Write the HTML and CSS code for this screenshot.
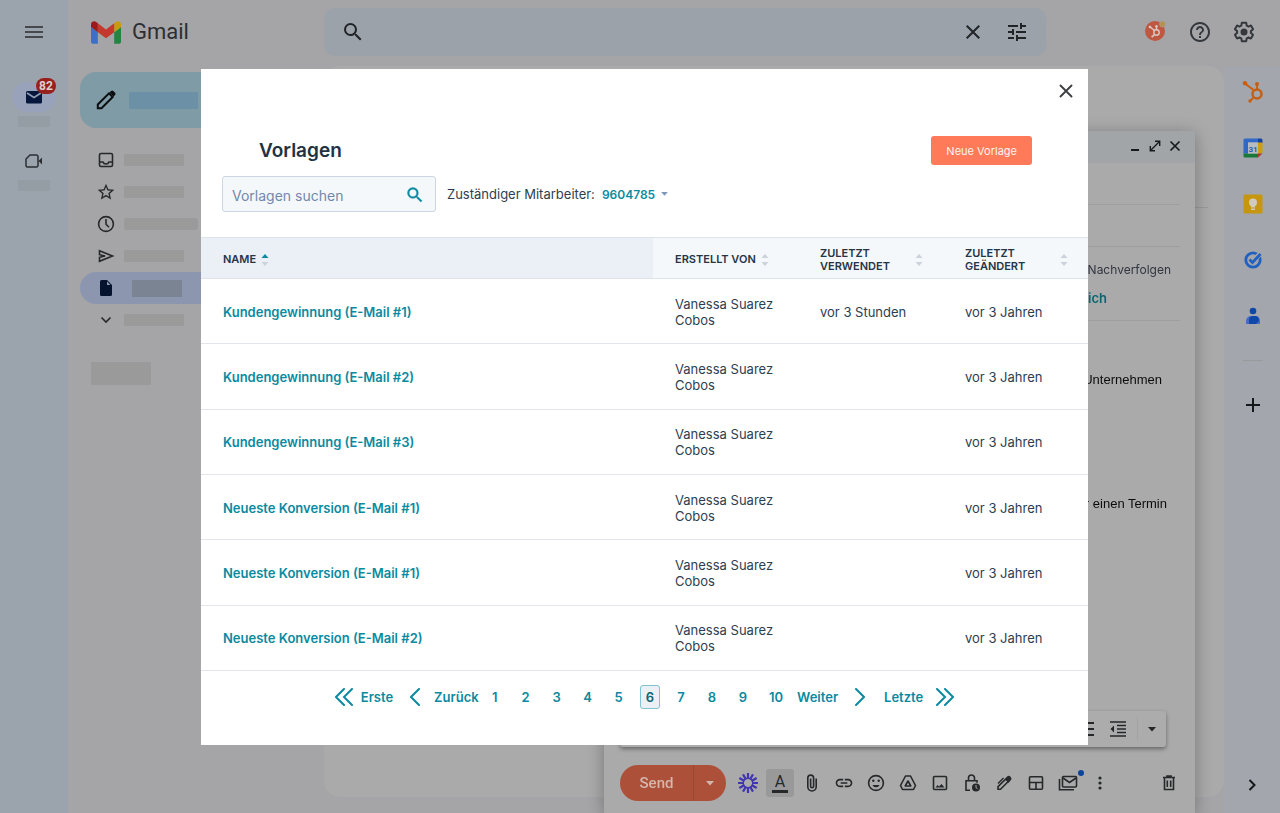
FILE: index.html
```html
<!DOCTYPE html>
<html lang="de">
<head>
<meta charset="utf-8">
<meta name="viewport" content="width=device-width, initial-scale=1">
<title>Gmail – Vorlagen</title>
<link rel="stylesheet" href="styles.css">
</head>
<body>
<svg class="sprite" aria-hidden="true">
  <symbol id="close" viewBox="0 0 24 24"><path d="M19 6.41 17.59 5 12 10.59 6.41 5 5 6.41 10.59 12 5 17.59 6.41 19 12 13.41 17.59 19 19 17.59 13.41 12z"/></symbol>
  <symbol id="search" viewBox="0 0 24 24"><path d="M15.5 14h-.79l-.28-.27A6.471 6.471 0 0 0 16 9.5 6.5 6.5 0 1 0 9.5 16c1.61 0 3.09-.59 4.23-1.57l.27.28v.79l5 4.99L20.49 19l-4.99-5zm-6 0C7.01 14 5 11.99 5 9.5S7.01 5 9.5 5 14 7.01 14 9.5 11.99 14 9.5 14z"/></symbol>
  <symbol id="sort" viewBox="0 0 8 14"><path d="M4 1 7.5 5H.5z"/><path d="M4 13 .5 9h7z" fill="#cbd2db"/></symbol>
  <symbol id="caret" viewBox="0 0 10 6"><path d="M0 0h10L5 5.5z"/></symbol>
</svg>

<div class="app">
  <nav class="rail" aria-label="Apps">
    <button class="icon-btn" aria-label="Menü"><svg width="24" height="24" viewBox="0 0 24 24" fill="#45484c"><path d="M3 18h18v-2H3zm0-5h18v-2H3zM3 6v2h18V6z"/></svg></button>
    <button class="rail-mail" aria-label="E-Mail">
      <svg width="20" height="20" viewBox="0 0 20 20"><rect x="2" y="4" width="16" height="12.500" rx="1.500" fill="#05173d"/><path d="m3 6 7 4.500L17 6" fill="none" stroke="#95a0b5" stroke-width="1.500"/></svg>
      <span class="badge">82</span>
    </button>
    <span class="bar rail-bar"></span>
    <button class="icon-btn rail-meet" aria-label="Meet"><svg width="20" height="20" viewBox="0 0 20 20"><path d="M6 4h6.500A1.500 1.500 0 0 1 14 5.500v9a1.500 1.500 0 0 1-1.500 1.500h-9A1.500 1.500 0 0 1 2 14.500V8z" fill="none" stroke="#2b2f33" stroke-width="1.500" stroke-linejoin="round"/><path d="m14.500 10 3.500-3.500v7z" fill="#2b2f33"/></svg></button>
    <span class="bar rail-bar rail-bar-meet"></span>
  </nav>

  <div class="main">
    <header class="topbar">
      <a class="brand" href="#"><svg width="30" height="23" viewBox="52 42 88 66"><path fill="#3d6fc6" d="M58 108h14V74L52 59v43c0 3.320 2.690 6 6 6"/><path fill="#238542" d="M120 108h14c3.320 0 6-2.690 6-6V59l-20 15"/><path fill="#c99a10" d="M120 48v26l20-15v-8c0-7.420-8.470-11.650-14.400-7.200"/><path fill="#c5382d" d="M72 74V48l24 18 24-18v26L96 92"/><path fill="#9c1a1a" d="M52 51v8l20 15V48l-5.600-4.200c-5.940-4.450-14.400-.22-14.400 7.200"/></svg><span>Gmail</span></a>
      <form class="mail-search" role="search">
        <svg width="24" height="24" fill="#202427"><use href="#search"/></svg>
        <input type="text" aria-label="E-Mails durchsuchen">
        <button type="button" class="icon-btn" aria-label="Suche löschen"><svg width="24" height="24" fill="#202427"><use href="#close"/></svg></button>
        <button type="button" class="icon-btn" aria-label="Suchoptionen"><svg width="24" height="24" viewBox="0 0 24 24" fill="#202427"><path d="M3 17v2h6v-2H3zM3 5v2h10V5H3zm10 16v-2h8v-2h-8v-2h-2v6h2zM7 9v2H3v2h4v2h2V9H7zm14 4v-2H11v2h10zm-6-4h2V7h4V5h-4V3h-2v6z"/></svg></button>
      </form>
      <div class="top-actions">
        <button class="icon-btn" aria-label="HubSpot"><svg width="24" height="24" viewBox="0 0 24 24"><circle cx="11" cy="11" r="10" fill="#c05740"/><g fill="none" stroke="#d8cac5" stroke-width="1.400"><circle cx="12.500" cy="12.500" r="2.700"/><path d="m6 7 4.500 3.500M12.500 9.800V6.500M10.500 14.500l-2 2"/></g><circle cx="6" cy="7" r="1.300" fill="#d8cac5"/><circle cx="12.500" cy="6.300" r="1.200" fill="#d8cac5"/><circle cx="8.300" cy="16.500" r="1" fill="#d8cac5"/><circle cx="18.500" cy="4" r="3" fill="#b3934e" stroke="#a5a5a8" stroke-width=".6"/></svg></button>
        <button class="icon-btn" aria-label="Hilfe"><svg width="24" height="24" viewBox="0 0 24 24" fill="#34373b"><path d="M11 18h2v-2h-2v2zm1-16C6.480 2 2 6.480 2 12s4.480 10 10 10 10-4.480 10-10S17.520 2 12 2zm0 18c-4.410 0-8-3.590-8-8s3.590-8 8-8 8 3.590 8 8-3.590 8-8 8zm0-14c-2.210 0-4 1.790-4 4h2c0-1.100.9-2 2-2s2 .9 2 2c0 2-3 1.750-3 5h2c0-2.250 3-2.500 3-5 0-2.210-1.790-4-4-4z"/></svg></button>
        <button class="icon-btn" aria-label="Einstellungen"><svg width="24" height="24" viewBox="0 0 24 24" fill="#34373b"><path d="M13.850 22.250h-3.700c-.74 0-1.360-.54-1.450-1.270l-.27-1.890c-.27-.14-.53-.29-.79-.46l-1.800.72c-.7.26-1.470-.03-1.810-.65L2.200 15.530c-.35-.66-.2-1.440.36-1.880l1.530-1.190c-.01-.15-.02-.3-.02-.46 0-.15.010-.31.020-.46l-1.520-1.190c-.59-.45-.74-1.260-.37-1.880l1.850-3.190c.34-.62 1.110-.9 1.790-.63l1.810.73c.26-.17.52-.32.78-.46l.27-1.910c.09-.7.71-1.250 1.440-1.250h3.700c.74 0 1.360.54 1.450 1.270l.27 1.890c.27.140.53.290.79.460l1.800-.72c.71-.26 1.480.03 1.820.65l1.840 3.180c.36.66.2 1.440-.36 1.880l-1.520 1.190c.01.150.02.300.02.460s-.01.310-.02.460l1.520 1.190c.56.450.72 1.230.37 1.860l-1.860 3.220c-.34.620-1.110.9-1.800.63l-1.800-.72c-.26.170-.52.320-.78.460l-.27 1.910c-.1.680-.72 1.220-1.460 1.220zm-3.230-2h2.760l.37-2.550.53-.22c.44-.18.880-.44 1.340-.78l.45-.34 2.380.96 1.380-2.400-2.030-1.580.07-.56c.03-.26.06-.51.06-.78s-.03-.53-.06-.78l-.07-.56 2.030-1.580-1.390-2.400-2.390.96-.45-.35c-.42-.32-.87-.58-1.330-.77l-.52-.22-.37-2.550h-2.760l-.37 2.550-.53.210c-.44.190-.88.440-1.340.79l-.45.330-2.380-.95-1.390 2.390 2.030 1.580-.07.56a7 7 0 0 0-.06.79c0 .26.02.53.06.78l.07.56-2.030 1.580 1.380 2.400 2.390-.96.450.35c.43.33.86.580 1.330.77l.53.22.38 2.550z"/><circle cx="12" cy="12" r="3.500"/></svg></button>
      </div>
    </header>

    <div class="content">
      <nav class="folders" aria-label="Ordner">
        <button class="compose-btn" aria-label="Schreiben"><svg width="24" height="24" viewBox="0 0 24 24"><path d="M3.800 20.200v-3.700L15 5.300l3.700 3.700L7.500 20.200z" fill="none" stroke="#0a0e10" stroke-width="2"/><path d="m15.500 4.500 1.600-1.600a1.600 1.600 0 0 1 2.200 0l1.800 1.800a1.600 1.600 0 0 1 0 2.200L19.500 8.500z" fill="#0a0e10"/></svg><span class="bar compose-bar"></span></button>
        <a class="folder" href="#" aria-label="Posteingang"><svg width="20" height="20" viewBox="0 0 20 20" class="line"><rect x="3.500" y="3.500" width="13" height="13" rx="1.500"/><path d="M3.500 12H7c.4 1.300 1.500 2 3 2s2.600-.7 3-2h3.500"/></svg><span class="bar"></span></a>
        <a class="folder" href="#" aria-label="Markiert"><svg width="20" height="20" viewBox="0 0 24 24" fill="#26282a"><path d="m22 9.240-7.190-.62L12 2 9.190 8.630 2 9.240l5.460 4.730L5.820 21 12 17.270 18.180 21l-1.630-7.030L22 9.240zM12 15.400l-3.760 2.270 1-4.280-3.320-2.880 4.380-.38L12 6.100l1.710 4.040 4.380.38-3.320 2.880 1 4.280L12 15.400z"/></svg><span class="bar"></span></a>
        <a class="folder" href="#" aria-label="Zurückgestellt"><svg width="20" height="20" viewBox="0 0 20 20" class="line"><circle cx="10" cy="10" r="7.400"/><path d="M10 5v5.200l3 3"/></svg><span class="bar bar-wide"></span></a>
        <a class="folder" href="#" aria-label="Gesendet"><svg width="20" height="20" viewBox="0 0 20 20" class="line"><path d="M3.500 4.800 16.500 10l-13 5.200V11.300L9 10 3.500 8.700z"/></svg><span class="bar"></span></a>
        <a class="folder folder-active" href="#" aria-label="Entwürfe"><svg width="20" height="20" viewBox="0 0 20 20"><path d="M5.500 2H11l5 5v9.500a1.500 1.500 0 0 1-1.500 1.500h-9A1.500 1.500 0 0 1 4 16.500v-13A1.500 1.500 0 0 1 5.500 2z" fill="#05132f"/><path d="M11 3.500V7h3.500z" fill="#909ab4"/></svg><span class="bar bar-active"></span></a>
        <a class="folder" href="#" aria-label="Mehr"><svg width="20" height="20" viewBox="0 0 20 20" class="line"><path d="m5.500 7.500 4.500 4.500 4.500-4.500"/></svg><span class="bar"></span></a>
        <span class="bar labels-bar"></span>
      </nav>
      <main class="mail"><hr></main>
      <aside class="addons" aria-label="Add-ons">
        <button class="icon-btn" aria-label="HubSpot"><svg width="28" height="28" viewBox="0 0 28 28"><g fill="none" stroke="#c45f14"><circle cx="18" cy="16" r="4.500" stroke-width="2.500"/><path stroke-width="1.800" d="M6 5.500 14.500 12M18 11V6M14.500 19.500l-3 3"/></g><g fill="#c45f14"><circle cx="6" cy="5.300" r="2.200"/><circle cx="18" cy="6" r="2"/><circle cx="11" cy="23" r="1.700"/></g></svg></button>
        <button class="icon-btn" aria-label="Kalender"><svg width="28" height="28" viewBox="0 0 28 28"><path d="M6 4.500h13v4H9v11H4.500V6A1.500 1.500 0 0 1 6 4.500z" fill="#2f68c6"/><path d="M19 4.500h3A1.500 1.500 0 0 1 23.500 6v3H19z" fill="#16439b"/><path d="M19 8.500h4.500v11H19z" fill="#cf9d10"/><path d="M4.500 19.500H19v4H6A1.500 1.500 0 0 1 4.500 22z" fill="#16793a"/><path d="M19 19.500h4.500l-4.500 4z" fill="#b2372c"/><path d="M9 8.500h10v11H9z" fill="#b9bbc0"/><text x="14" y="17.500" text-anchor="middle" class="cal-day">31</text></svg></button>
        <button class="icon-btn" aria-label="Notizen"><svg width="28" height="28" viewBox="0 0 28 28"><rect x="4.500" y="4.500" width="19" height="19" rx="1.500" fill="#c6960e"/><circle cx="14" cy="12.500" r="4" fill="#d0cbbc"/><path d="M12 14h4v3.500h-4zM12 18.500h4v1.500h-4z" fill="#d0cbbc"/></svg></button>
        <button class="icon-btn" aria-label="Aufgaben"><svg width="28" height="28" viewBox="0 0 28 28" fill="none" stroke="#2060be"><circle cx="14" cy="14" r="7.200" stroke-width="2.800"/><path d="m14 15 7.500-7.500" stroke="#a3a6ad" stroke-width="5"/><path d="m10.500 13.500 3 3 8-8.500" stroke-width="2.800"/></svg></button>
        <button class="icon-btn" aria-label="Kontakte"><svg width="28" height="28" viewBox="0 0 28 28"><path d="M7 22v-3a5 5 0 0 1 5-5h4a5 5 0 0 1 5 5v3z" fill="#4a6bc4"/><path d="M10 22v-4a4 4 0 0 1 4-4h2a4 4 0 0 1 4 4v1l-3 3z" fill="#1048a8"/><circle cx="14" cy="9" r="3.300" fill="#1048a8"/></svg></button>
        <hr>
        <button class="icon-btn addon-plus" aria-label="Add-on hinzufügen"><svg width="28" height="28" viewBox="0 0 28 28"><path d="M14 7v14M7 14h14" stroke="#151719" stroke-width="2"/></svg></button>
        <button class="icon-btn addon-toggle" aria-label="Seitenleiste ausblenden"><svg width="28" height="28" viewBox="0 0 28 28"><path d="m10.500 9 5 5-5 5" fill="none" stroke="#151719" stroke-width="2"/></svg></button>
      </aside>
    </div>
  </div>
</div>

<section class="composer" aria-label="Neue Nachricht">
  <div class="composer-head">
    <button class="icon-btn" aria-label="Minimieren"><svg width="16" height="16" viewBox="0 0 16 16"><path d="M4 12h8" stroke="#17191b" stroke-width="2"/></svg></button>
    <button class="icon-btn" aria-label="Vollbild"><svg width="16" height="16" viewBox="0 0 16 16" fill="none" stroke="#17191b" stroke-width="1.400"><path d="m3.500 12.500 9-9M8 3.300h4.700V8M3.300 8v4.700H8"/></svg></button>
    <button class="icon-btn" aria-label="Schließen"><svg width="16" height="16" viewBox="0 0 16 16"><path d="m3.500 3.500 9 9m0-9-9 9" stroke="#17191b" stroke-width="1.700"/></svg></button>
  </div>
  <div class="composer-field"></div>
  <div class="composer-field"></div>
  <div class="composer-tracking">
    <div>Nachverfolgen</div>
    <a class="composer-link" href="#">mich</a>
  </div>
  <div class="composer-text">
    <p class="line-company">Unternehmen</p>
    <p class="line-meeting">für einen Termin</p>
  </div>
  <div class="format-bar">
    <button class="icon-btn" aria-label="Liste"><svg width="18" height="18" viewBox="0 0 18 18"><path d="M0 3h13M0 9h13M0 15h13" stroke="#242628" stroke-width="1.800"/></svg></button>
    <button class="icon-btn" aria-label="Einzug verkleinern"><svg width="18" height="18" viewBox="0 0 18 18"><path d="M1 2h16M8 5.500h9M8 9h9M8 12.500h9M1 16h16" stroke="#242628" stroke-width="1.600"/><path d="M1.500 9 5 5.500v7z" fill="#242628"/></svg></button>
    <button class="icon-btn format-more" aria-label="Mehr Formatierung"><svg width="8" height="5" fill="#242628"><use href="#caret"/></svg></button>
  </div>
  <div class="composer-tools">
    <div class="send"><button class="send-main">Send</button><button class="send-more" aria-label="Sendeoptionen"><svg width="8" height="5" fill="#d2b7ae"><use href="#caret"/></svg></button></div>
    <button class="tool" aria-label="Assistent"><svg width="22" height="22" viewBox="0 0 22 22"><circle cx="11" cy="11" r="4.800" fill="none" stroke="#4135b0" stroke-width="1.400"/><path stroke="#4135b0" stroke-width="2.200" d="M11 1v6M11 15v6M1 11h6M15 11h6M6 2.340l3 5.200M13 14.460l3 5.200M2.340 6l5.200 3M14.460 13l5.200 3M2.340 16l5.200-3M14.460 9l5.200-3M6 19.660l3-5.200M13 7.540l3-5.200"/></svg></button>
    <button class="tool tool-active" aria-label="Formatierung"><span>A</span></button>
    <button class="tool" aria-label="Datei anhängen"><svg width="20" height="20" viewBox="0 0 20 20" class="line"><path d="M14.200 5.500v8.300a4.200 4.200 0 0 1-8.400 0V5a2.900 2.900 0 0 1 5.800 0v8.300a1.500 1.500 0 0 1-3 0V5.500"/></svg></button>
    <button class="tool" aria-label="Link einfügen"><svg width="20" height="20" viewBox="0 0 24 24" fill="#26282a"><path d="M3.900 12c0-1.710 1.390-3.100 3.100-3.100h4V7H7c-2.760 0-5 2.240-5 5s2.240 5 5 5h4v-1.900H7c-1.710 0-3.100-1.390-3.100-3.100zM8 13h8v-2H8v2zm9-6h-4v1.900h4c1.710 0 3.100 1.390 3.100 3.100s-1.390 3.100-3.100 3.100h-4V17h4c2.760 0 5-2.240 5-5s-2.240-5-5-5z"/></svg></button>
    <button class="tool" aria-label="Emoji"><svg width="20" height="20" viewBox="0 0 20 20" class="line"><circle cx="10" cy="10" r="7.400"/><path d="M6.500 12h7c-.6 1.500-1.900 2.300-3.500 2.300S7.100 13.500 6.500 12z" fill="#26282a" stroke="none"/><circle cx="7.300" cy="7.700" r="1.200" fill="#26282a" stroke="none"/><circle cx="12.700" cy="7.700" r="1.200" fill="#26282a" stroke="none"/></svg></button>
    <button class="tool" aria-label="Drive"><svg width="20" height="20" viewBox="0 0 20 20" class="line"><path d="M7.500 3h5l5 9.500-2 4h-11l-2-4zM10 8l2.800 5H7.200z" stroke-linejoin="round"/></svg></button>
    <button class="tool" aria-label="Foto"><svg width="20" height="20" viewBox="0 0 20 20" class="line"><rect x="3.500" y="3.500" width="13" height="13" rx="1"/><path d="m5.500 14.500 2-2.500 1.500 1.500 2.500-2.500 3 3.500z" fill="#26282a" stroke="none"/></svg></button>
    <button class="tool" aria-label="Vertraulich"><svg width="20" height="20" viewBox="0 0 20 20" class="line"><path d="M8 17.200H4V7.800h11v2M6.500 7.500V5a3 3 0 0 1 6 0v2.500"/><circle cx="14" cy="14.500" r="4" fill="#26282a" stroke="none"/><path d="M14 12v2.700l1.500 1" stroke="#aaaaaa" stroke-width="1"/></svg></button>
    <button class="tool" aria-label="Signatur"><svg width="20" height="20" viewBox="0 0 20 20" class="line"><path d="M4 16.200v-2.500L13.500 4.200a1.700 1.700 0 0 1 2.500 2.500L6.500 16.200z"/><path d="m4 10.500 5.500-5.500" stroke-width="1.400"/><path d="m11 6.500 3.500 3.500 3-4L15 3z" fill="#26282a" stroke="none"/></svg></button>
    <button class="tool" aria-label="Layout"><svg width="20" height="20" viewBox="0 0 20 20" class="line"><rect x="3.500" y="3.700" width="13" height="12.600" rx="1"/><path d="M3.500 9.500h13M10 9.500v7"/></svg></button>
    <button class="tool tool-merge" aria-label="Serien-E-Mail"><svg width="20" height="20" viewBox="0 0 20 20" class="line"><rect x="4.500" y="3.500" width="14" height="10.500" rx="1"/><path d="m5 5 6.500 4.500L18 5M1.500 6v10.800H16"/></svg></button>
    <button class="tool" aria-label="Weitere Optionen"><svg width="20" height="20" viewBox="0 0 20 20" fill="#26282a"><circle cx="10" cy="5" r="1.600"/><circle cx="10" cy="10" r="1.600"/><circle cx="10" cy="15" r="1.600"/></svg></button>
    <button class="tool tool-trash" aria-label="Entwurf verwerfen"><svg width="20" height="20" viewBox="0 0 20 20" class="line"><path d="M5.500 5v11.500h9V5M4 4.500h12M8 4V3h4v1M8.300 7.500v6.500M11.700 7.500v6.500"/></svg></button>
  </div>
</section>

<div class="overlay">
  <div class="modal" role="dialog" aria-modal="true" aria-labelledby="modal-title">
    <button class="icon-btn modal-close" aria-label="Schließen"><svg width="24" height="24" viewBox="0 0 24 24"><path d="m6.500 6.500 11 11m0-11-11 11" stroke="#3d3f42" stroke-width="1.900" stroke-linecap="round"/></svg></button>
    <div class="modal-head"><h1 id="modal-title">Vorlagen</h1><button class="btn-primary">Neue Vorlage</button></div>
    <div class="filters">
      <label class="template-search"><input type="text" placeholder="Vorlagen suchen" aria-label="Vorlagen suchen"><svg width="20" height="20" fill="#0b8a9f" stroke="#0b8a9f" stroke-width=".5"><use href="#search"/></svg></label>
      <div class="owner"><span>Zuständiger Mitarbeiter:</span><button class="owner-btn">9604785<svg width="7" height="4" fill="#7c98b6"><use href="#caret"/></svg></button></div>
    </div>
    <table>
      <colgroup><col><col class="col-meta"><col class="col-meta"><col class="col-meta"></colgroup>
      <thead><tr>
        <th class="sorted" aria-sort="ascending"><button>NAME<svg width="8" height="14"><use href="#sort"/></svg></button></th>
        <th><button>ERSTELLT VON<svg width="8" height="14"><use href="#sort"/></svg></button></th>
        <th><button class="spread">ZULETZT<br>VERWENDET<svg width="8" height="14"><use href="#sort"/></svg></button></th>
        <th><button class="spread">ZULETZT<br>GEÄNDERT<svg width="8" height="14"><use href="#sort"/></svg></button></th>
      </tr></thead>
      <tbody>
        <tr><td><a href="#">Kundengewinnung (E-Mail #1)</a></td><td>Vanessa Suarez Cobos</td><td>vor 3 Stunden</td><td>vor 3 Jahren</td></tr>
        <tr><td><a href="#">Kundengewinnung (E-Mail #2)</a></td><td>Vanessa Suarez Cobos</td><td></td><td>vor 3 Jahren</td></tr>
        <tr><td><a href="#">Kundengewinnung (E-Mail #3)</a></td><td>Vanessa Suarez Cobos</td><td></td><td>vor 3 Jahren</td></tr>
        <tr><td><a href="#">Neueste Konversion (E-Mail #1)</a></td><td>Vanessa Suarez Cobos</td><td></td><td>vor 3 Jahren</td></tr>
        <tr><td><a href="#">Neueste Konversion (E-Mail #1)</a></td><td>Vanessa Suarez Cobos</td><td></td><td>vor 3 Jahren</td></tr>
        <tr><td><a href="#">Neueste Konversion (E-Mail #2)</a></td><td>Vanessa Suarez Cobos</td><td></td><td>vor 3 Jahren</td></tr>
      </tbody>
    </table>
    <nav class="pager" aria-label="Seiten">
      <button class="first"><svg width="18" height="18" viewBox="0 0 18 18"><path d="M9 1 1 9l8 8M17 1 9 9l8 8"/></svg>Erste</button>
      <button class="prev"><svg width="10" height="18" viewBox="0 0 10 18"><path d="M9 1 1 9l8 8"/></svg>Zurück</button>
      <div class="pages"><button>1</button><button>2</button><button>3</button><button>4</button><button>5</button><button class="current" aria-current="page">6</button><button>7</button><button>8</button><button>9</button><button>10</button></div>
      <button class="next">Weiter<svg width="10" height="18" viewBox="0 0 10 18"><path d="m1 1 8 8-8 8"/></svg></button>
      <button class="last">Letzte<svg width="18" height="18" viewBox="0 0 18 18"><path d="m1 1 8 8-8 8M9 1l8 8-8 8"/></svg></button>
    </nav>
  </div>
</div>
</body>
</html>
```
FILE: styles.css
```css
* { box-sizing: border-box; }
body { margin: 0; font-family: Inter, "Open Sans", sans-serif; font-size: 13px; color: #2d3e50; }
button, input { font: inherit; color: inherit; margin: 0; padding: 0; border: 0; background: none; }
button { cursor: pointer; }
a { color: inherit; text-decoration: none; }
svg { display: block; flex: none; }
hr { margin: 0; border: 0; border-top: 1px solid #999a9c; }
.sprite { position: absolute; width: 0; height: 0; }
.icon-btn { display: flex; align-items: center; justify-content: center; }
.line { fill: none; stroke: #26282a; stroke-width: 1.6; }
.bar { display: block; background: #9a9a9a; width: 60px; height: 12px; }

/* Mailbox */
.app { display: grid; grid-template-columns: 68px 1fr; min-height: 100vh; background: #a5a5a8; }
.rail { display: flex; flex-direction: column; align-items: center; padding-top: 20px; background: #9ba3ad; }
.rail-mail { position: relative; display: flex; align-items: center; justify-content: center; width: 44px; height: 30px; margin-top: 38px; border-radius: 15px; background: #98a2ba; }
.badge { position: absolute; top: -4px; right: 0; width: 20px; height: 16px; border-radius: 8px; background: #98201c; color: #dcd0d0; font: bold 12px/16px Roboto, sans-serif; text-align: center; }
.rail-bar { width: 32px; height: 11px; margin-top: 4px; background: #949ca4; }
.rail-meet { height: 24px; margin-top: 22px; }
.rail-bar-meet { margin-top: 7px; }

.main { display: flex; flex-direction: column; min-width: 0; }
.topbar { display: flex; height: 66px; padding: 8px 24px 10px 0; }
.brand { display: flex; align-items: center; gap: 11px; width: 256px; padding-left: 23px; font: 22px/48px Roboto, sans-serif; color: #2c2f32; }
.mail-search { display: flex; flex: 1; align-items: center; gap: 20px; padding: 0 17px; border-radius: 10px; background: #9ba2aa; }
.mail-search input { flex: 1; min-width: 0; }
.top-actions { display: flex; align-items: center; gap: 20px; padding-left: 98px; }
.content { display: flex; flex: 1; }
.folders { width: 256px; padding: 6px 0 0 12px; }
.compose-btn { display: flex; align-items: center; gap: 11px; width: 150px; height: 56px; margin-bottom: 16px; padding-left: 14px; border-radius: 16px; background: #7f9ba6; }
.compose-bar { width: 69px; height: 17px; background: #6c91a6; }
.folder { display: flex; align-items: center; gap: 8px; height: 32px; padding-left: 16px; }
.bar-wide { width: 74px; border-radius: 3px; }
.folder-active { gap: 16px; border-radius: 16px 0 0 16px; background: #8c96af; }
.bar-active { width: 50px; height: 17px; background: #7a8493; }
.labels-bar { height: 23px; margin: 26px 0 0 11px; }
.mail { flex: 1; margin-bottom: 16px; padding: 141px 16px 0; border-radius: 16px; background: #aaaaaa; }
.addons { display: flex; flex-direction: column; align-items: center; gap: 28px; width: 56px; padding: 12px 0 14px 2px; background: #a3a6ad; }
.addons hr { width: 20px; margin-top: 2px; }
.addon-plus { margin-top: 2px; }
.addon-toggle { margin-top: auto; }
.cal-day { font: bold 8px Roboto, sans-serif; fill: #2b5fb5; }

/* Compose window */
.composer { position: fixed; top: 131px; right: 85px; bottom: 0; left: 604px; display: flex; flex-direction: column; background: #aaaaaa; box-shadow: 0 3px 16px rgba(0, 0, 0, .3); }
.composer-head { display: flex; justify-content: flex-end; gap: 4px; height: 32px; padding: 7px 12px 9px; background: #a2a5a8; }
.composer-field { height: 42px; margin: 0 15px; border-bottom: 1px solid #9e9e9e; }
.composer-tracking { margin: 0 15px; padding: 9px 9px 8px; border-bottom: 1px solid #9e9e9e; color: #30353f; line-height: 28px; text-align: right; }
.composer-tracking div { font-size: 12px; }
.composer-link { margin-right: 64px; color: #0a6570; font-weight: 600; }
.composer-text { flex: 1; padding-top: 49px; font: 13px/20px "Liberation Sans", sans-serif; color: #0c0c0c; text-align: right; }
.composer-text p { margin: 0; }
.line-company { padding-right: 33px; }
.composer-text .line-meeting { margin-top: 104px; padding-right: 28px; }
.format-bar { display: flex; align-items: center; justify-content: flex-end; gap: 10px; height: 36px; margin: 0 29px 0 16px; border-radius: 3px; background: #acacac; box-shadow: 0 2px 4px rgba(0, 0, 0, .4); }
.format-more { width: 29px; height: 24px; border-left: 1px solid #a3a3a3; }
.composer-tools { display: flex; align-items: center; gap: 4px; padding: 18px 12px 12px 16px; }
.send { display: flex; width: 106px; height: 36px; margin-right: 4px; border-radius: 18px; background: #ad5039; overflow: hidden; color: #d2b7ae; }
.send-main { flex: 1; font: 500 15px Roboto, sans-serif; }
.send-more { display: flex; align-items: center; justify-content: center; width: 33px; border-left: 1px solid #9a4733; }
.tool { display: flex; align-items: center; justify-content: center; width: 28px; height: 28px; border-radius: 3px; }
.tool-active { background: #999999; }
.tool-active span { width: 16px; border-bottom: 3px solid #26282a; font: 16px/16px Roboto, sans-serif; color: #26282a; }
.tool-merge { position: relative; }
.tool-merge::after { content: ""; position: absolute; top: 1px; right: -2px; width: 6px; height: 6px; border-radius: 50%; background: #0b449c; }
.tool-trash { margin-left: auto; }

/* Template dialog */
.overlay { position: fixed; inset: 0; padding: 69px 192px 0 201px; }
.modal { background: #ffffff; padding: 10px 0 36px; }
.modal-close { margin: 0 10px 0 auto; }
.modal-head { display: flex; align-items: center; justify-content: space-between; margin-top: 33px; padding: 0 56px 0 58px; }
h1 { margin: 0; font-size: 19px; font-weight: 600; line-height: 28px; color: #213343; }
.btn-primary { height: 29px; padding: 0 15px; border-radius: 3px; background: #ff7a59; color: #fff3ee; font-size: 11px; }
.filters { display: flex; align-items: center; gap: 11px; margin: 11px 21px 25px; }
.template-search { display: flex; align-items: center; width: 214px; height: 36px; padding: 2px 10px 0 9px; border: 1px solid #cbd6e2; border-radius: 3px; background: #f5f8fa; }
.template-search input { flex: 1; min-width: 0; font-size: 14px; outline: 0; }
.template-search input::placeholder { color: #7189ac; opacity: 1; }
.owner { display: flex; align-items: center; gap: 7px; }
.owner-btn { display: flex; align-items: center; gap: 6px; color: #0b8a9f; font-size: 12px; font-weight: 600; }
table { width: 100%; height: 434px; margin-bottom: -1px; border-collapse: collapse; table-layout: fixed; }
.col-meta { width: 145px; }
th, td { padding: 1px 22px 0; text-align: left; border-bottom: 1px solid #e2e6eb; }
th { height: 41px; border-top: 1px solid #dfe3eb; border-bottom-color: #dfe3eb; padding: 3px 20px 0 22px; background: #f5f8fa; }
th.sorted { background: #eaf0f6; }
th button { display: flex; align-items: center; gap: 5px; font-size: 11px; font-weight: 600; line-height: 13px; text-align: left; color: #253547; white-space: nowrap; }
th .spread { display: grid; grid-template-columns: 1fr auto; width: 100%; }
th svg { fill: #cbd2db; }
th.sorted svg { fill: #0b8a9f; }
td { line-height: 16px; color: #2d3e50; }
td a { color: #0b8a9f; font-weight: 600; }
.pager { display: flex; align-items: center; justify-content: center; padding-top: 15px; color: #0b8a9f; font-weight: 600; }
.pager button { display: flex; align-items: center; height: 24px; }
.pager path { fill: none; stroke: #0b8a9f; stroke-width: 2; stroke-linecap: round; }
.first { gap: 8px; margin-right: 17px; }
.prev { gap: 14px; margin-right: 6px; }
.pages { display: flex; gap: 11px; }
.pages button { justify-content: center; min-width: 20px; padding: 0 5px; }
.pages .current { border: 1px solid #7fc4cf; border-radius: 3px; background: #eaf0f6; color: #0b6577; }
.next { gap: 17px; margin: 0 19px 0 9px; }
.last { gap: 13px; }
```
